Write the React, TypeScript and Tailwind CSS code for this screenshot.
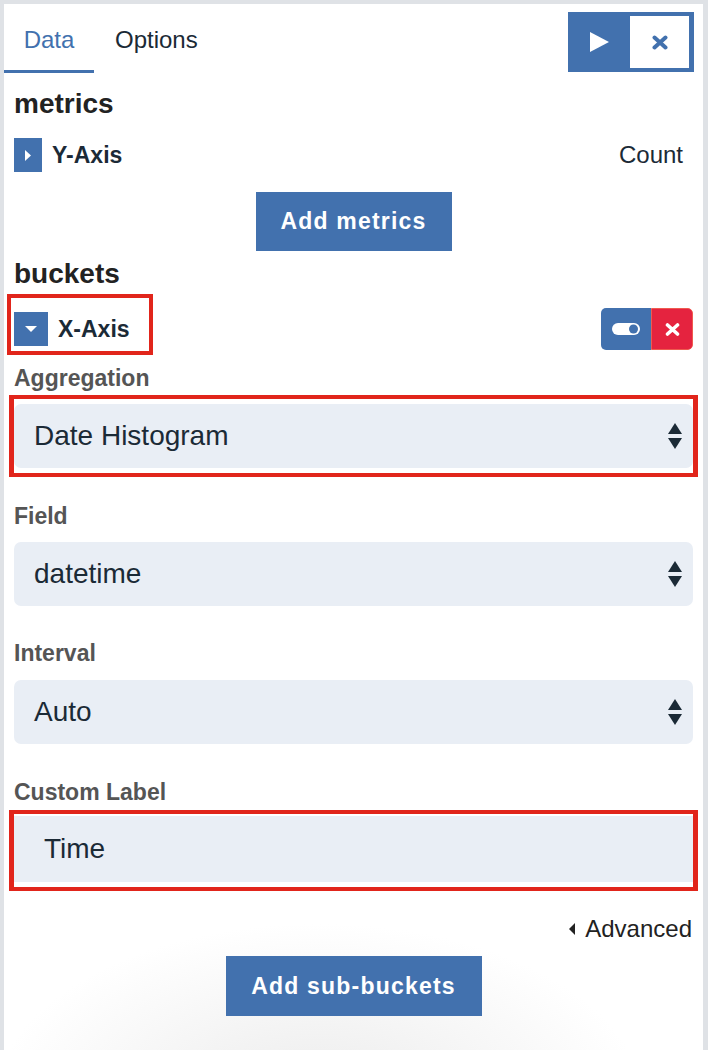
import React from "react";

const Arrows = () => (
  <svg width="14" height="26" viewBox="0 0 14 26" className="shrink-0">
    <polygon points="7,0 14,11 0,11" fill="#1b2a36" />
    <polygon points="0,15 14,15 7,26" fill="#1b2a36" />
  </svg>
);

function SelectBox({ value }: { value: string }) {
  return (
    <div className="flex h-[64px] items-center justify-between rounded-[7px] bg-[#e9eef5] pl-[20px] pr-[11px]">
      <span className="text-[28px] leading-[32px] text-[#1b2a36]">{value}</span>
      <Arrows />
    </div>
  );
}

function Label({ text, className }: { text: string; className?: string }) {
  return (
    <div className={`text-[23px] font-bold leading-[28px] text-[#555] ${className}`}>
      {text}
    </div>
  );
}

export default function App() {
  return (
    <div className="h-[1050px] w-[708px] overflow-hidden bg-[#dfe2e6] pl-[4px] pr-[5px] pt-[4px] font-['Liberation_Sans',Arial,sans-serif]">
      <div className="h-full bg-white">
        {/* header */}
        <div className="flex items-start justify-between">
          <div className="flex">
            <div className="w-[90px] border-b-[3px] border-[#4271ae] pb-[16px] pt-[22px] text-center text-[24px] leading-[28px] text-[#4271ae]">
              Data
            </div>
            <div className="pl-[21px] pt-[22px] text-[24px] leading-[28px] text-[#1b2a36]">
              Options
            </div>
          </div>
          <div className="mr-[9px] mt-[8px] flex h-[60px] w-[126px] bg-[#4271ae]">
            <div className="flex w-[62px] items-center justify-center">
              <svg width="19" height="20" viewBox="0 0 19 20">
                <polygon points="0,0 19,10 0,20" fill="#fff" />
              </svg>
            </div>
            <div className="mb-[4px] mr-[5px] mt-[4px] flex flex-1 items-center justify-center bg-white">
              <svg width="16" height="15" viewBox="0 0 16 15">
                <path d="M2.5 2.5 L13.5 12.5 M13.5 2.5 L2.5 12.5" stroke="#4271ae" strokeWidth="4" strokeLinecap="round" />
              </svg>
            </div>
          </div>
        </div>

        <div className="px-[10px]">
          <h2 className="mt-[15px] text-[28px] font-bold leading-[32px] text-[#222]">metrics</h2>

          <div className="mt-[18px] flex h-[34px] items-center justify-between">
            <div className="flex items-center">
              <div className="flex h-[34px] w-[28px] items-center justify-center bg-[#4271ae]">
                <svg width="6" height="11" viewBox="0 0 6 11">
                  <polygon points="0,0 6,5.5 0,11" fill="#fff" />
                </svg>
              </div>
              <span className="ml-[10px] text-[23px] font-bold text-[#1b2a36]">Y-Axis</span>
            </div>
            <span className="mr-[10px] text-[24px] text-[#1b2a36]">Count</span>
          </div>

          <div className="mt-[20px] flex justify-center">
            <button className="h-[59px] w-[196px] bg-[#4271ae] text-[23px] font-bold tracking-[1.2px] text-white">
              Add metrics
            </button>
          </div>

          <h2 className="mt-[7px] text-[28px] font-bold leading-[32px] text-[#222]">buckets</h2>

          <div className="mt-[4px] flex items-start justify-between">
            <div className="-ml-[7px] flex h-[61px] w-[146px] items-start border-4 border-[#e1251b] pl-[3px] pt-[14px]">
              <div className="flex h-[34px] w-[34px] items-center justify-center bg-[#4271ae]">
                <svg width="12" height="6" viewBox="0 0 12 6">
                  <polygon points="0,0 12,0 6,6" fill="#fff" />
                </svg>
              </div>
              <span className="ml-[10px] text-[23px] font-bold leading-[34px] text-[#1b2a36]">X-Axis</span>
            </div>
            <div className="mt-[14px] flex h-[42px] w-[92px] overflow-hidden rounded-[5px]">
              <div className="flex w-[50px] items-center justify-center bg-[#4271ae]">
                <svg width="28" height="12" viewBox="0 0 28 12">
                  <rect x="0" y="0" width="28" height="12" rx="6" fill="#fff" />
                  <circle cx="21.5" cy="6" r="4.5" fill="#4271ae" />
                </svg>
              </div>
              <div className="flex flex-1 items-center justify-center rounded-r-[5px] border border-[#ef5a4f] bg-[#e5233f]">
                <svg width="15" height="13" viewBox="0 0 15 13">
                  <path d="M2.5 2 L12.5 11 M12.5 2 L2.5 11" stroke="#fff" strokeWidth="3.6" strokeLinecap="round" />
                </svg>
              </div>
            </div>
          </div>

          <Label text="Aggregation" className="mt-[9px]" />
          <div className="-mx-[5px] mt-[3px] border-x-[5px] border-y-4 border-[#e1251b] py-[5px]">
            <SelectBox value="Date Histogram" />
          </div>

          <Label text="Field" className="mt-[25px]" />
          <div className="mt-[12px]">
            <SelectBox value="datetime" />
          </div>

          <Label text="Interval" className="mt-[33px]" />
          <div className="mt-[13px]">
            <SelectBox value="Auto" />
          </div>

          <Label text="Custom Label" className="mt-[34px]" />
          <div className="-mx-[5px] mt-[4px] border-x-[5px] border-y-4 border-[#e1251b] pb-[5px] pt-[2px]">
            <div className="flex h-[66px] items-center bg-[#e9eef5] pl-[30px]">
              <span className="text-[28px] leading-[32px] text-[#1b2a36]">Time</span>
            </div>
          </div>
        </div>

        <div className="bg-[radial-gradient(ellipse_at_45%_130%,#ebebeb_0%,#ffffff_60%)] px-[10px] pb-[40px]">
          <div className="flex items-center justify-end pr-[1px] pt-[24px]">
            <svg width="6" height="12" viewBox="0 0 6 12" className="mr-[10px]">
              <polygon points="6,0 0,6 6,12" fill="#222" />
            </svg>
            <span className="text-[24px] leading-[28px] text-[#222]">Advanced</span>
          </div>
          <div className="mt-[13px] flex justify-center">
            <button className="h-[60px] w-[256px] bg-[#4271ae] text-[23px] font-bold tracking-[1.2px] text-white">
              Add sub-buckets
            </button>
          </div>
        </div>
      </div>
    </div>
  );
}
